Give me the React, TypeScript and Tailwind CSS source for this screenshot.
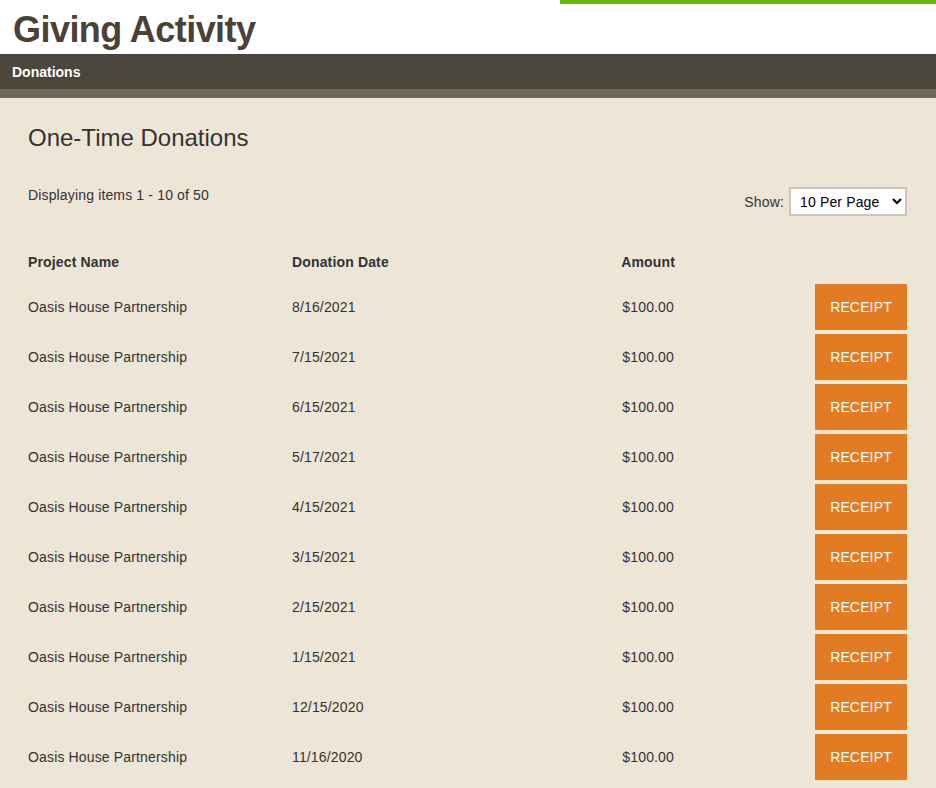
import React from 'react'

type Donation = {
  project: string
  date: string
  amount: string
}

const donations: Donation[] = [
  { project: 'Oasis House Partnership', date: '8/16/2021', amount: '$100.00' },
  { project: 'Oasis House Partnership', date: '7/15/2021', amount: '$100.00' },
  { project: 'Oasis House Partnership', date: '6/15/2021', amount: '$100.00' },
  { project: 'Oasis House Partnership', date: '5/17/2021', amount: '$100.00' },
  { project: 'Oasis House Partnership', date: '4/15/2021', amount: '$100.00' },
  { project: 'Oasis House Partnership', date: '3/15/2021', amount: '$100.00' },
  { project: 'Oasis House Partnership', date: '2/15/2021', amount: '$100.00' },
  { project: 'Oasis House Partnership', date: '1/15/2021', amount: '$100.00' },
  { project: 'Oasis House Partnership', date: '12/15/2020', amount: '$100.00' },
  { project: 'Oasis House Partnership', date: '11/16/2020', amount: '$100.00' },
]

const App = () => {
  return (
    <div className="min-h-screen bg-[#ede6d6] font-['Liberation_Sans',Arial,sans-serif] text-[#333]">
      {/* Page header */}
      <div className="relative h-[54px] bg-white">
        <div className="absolute top-0 right-0 h-1 w-[376px] bg-[#68b612]" />
        <h1 className="pl-[13px] pt-[10px] text-[36px] leading-[40px] font-bold tracking-[-0.55px] text-[#4a4236]">
          Giving Activity
        </h1>
      </div>

      {/* Nav bar */}
      <div className="flex h-[35px] items-center bg-[#4b463b] px-3">
        <span className="text-[14px] leading-4 font-bold text-white">Donations</span>
      </div>
      <div className="h-[9px] bg-[#716959]" />

      <div className="pl-[28px] pr-[29px] pt-[26px] tracking-[0.15px]">
        <h2 className="text-[24px] leading-[28px] mb-[35px] tracking-normal">One-Time Donations</h2>

        <div className="flex items-start justify-between">
          <p className="text-[14px] leading-4">Displaying items 1 - 10 of 50</p>
          <div className="flex items-center gap-[5px]">
            <label className="text-[14px] leading-4">Show:</label>
            <select
              defaultValue="10"
              className="h-[29px] w-[118px] border-2 border-[#cdc6b6] bg-white pl-[5px] text-[14px] text-black"
            >
              <option value="10">10 Per Page</option>
              <option value="25">25 Per Page</option>
              <option value="50">50 Per Page</option>
            </select>
          </div>
        </div>

        {/* Table */}
        <div className="mt-[25px] grid h-[41px] grid-cols-[264px_248px_135px_1fr] items-center text-[14px] leading-4 font-bold">
          <div>Project Name</div>
          <div>Donation Date</div>
          <div className="text-right">Amount</div>
          <div />
        </div>
        {donations.map((d, i) => (
          <div key={i} className="grid h-[50px] grid-cols-[264px_248px_135px_1fr] items-center text-[14px] leading-4">
            <div>{d.project}</div>
            <div>{d.date}</div>
            <div className="pr-px text-right">{d.amount}</div>
            <div className="flex justify-end">
              <button className="h-[46px] w-[92px] bg-[#e37b22] text-[14px] text-white uppercase">Receipt</button>
            </div>
          </div>
        ))}
      </div>
    </div>
  )
}

export default App
